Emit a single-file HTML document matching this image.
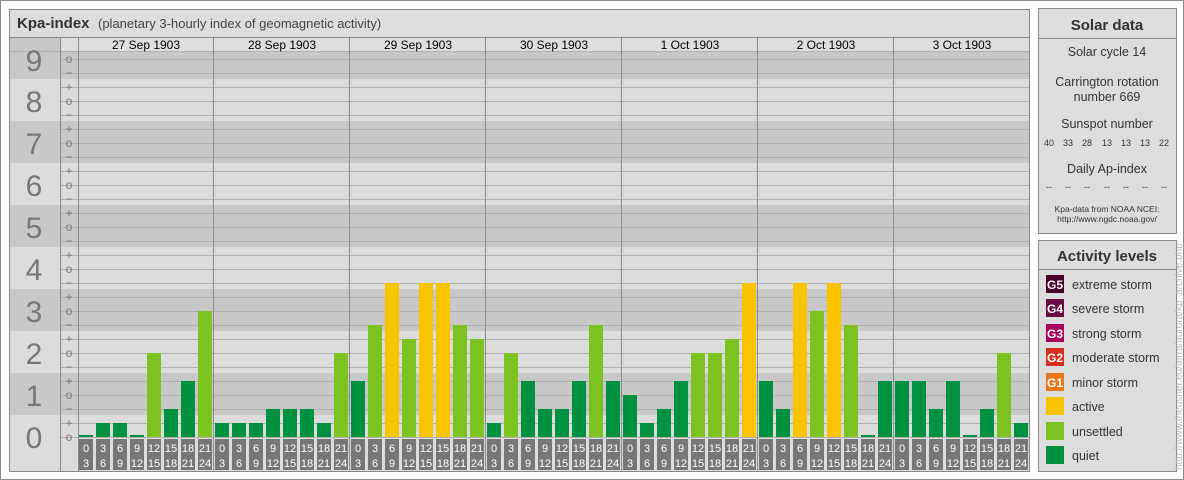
<!DOCTYPE html>
<html><head><meta charset="utf-8"><style>
html,body{margin:0;padding:0;background:#fff;}
svg{display:block;font-family:"Liberation Sans",Arial,sans-serif;}
.q{fill:#009140}.u{fill:#7cc220}.a{fill:#f8c400}
.hb{fill:#777}
.ht{fill:#fff;font-size:11px;text-anchor:middle}
.pm{fill:#777;font-size:12px;text-anchor:middle}
.big{fill:#777;font-size:30px;text-anchor:middle}
.dt{fill:#000;font-size:12px;text-anchor:middle}
.rt{fill:#333;font-size:12.5px;text-anchor:middle}
.lg{fill:#333;font-size:12.5px}
.gl{fill:#fff;font-size:12px;font-weight:bold;text-anchor:middle}
</style></head><body>
<svg width="1184" height="480" viewBox="0 0 1184 480" xmlns="http://www.w3.org/2000/svg">
<rect x="0.5" y="0.5" width="1183" height="479" fill="#fff" stroke="#888"/>
<rect x="9.5" y="9.5" width="1020" height="462" fill="#ddd" stroke="#888"/>
<line x1="9" y1="37.5" x2="1030" y2="37.5" stroke="#888"/>
<text x="17" y="28" font-size="15" font-weight="bold" fill="#333">Kpa-index</text>
<text x="98" y="28" font-size="13" fill="#444">(planetary 3-hourly index of geomagnetic activity)</text>
<rect x="10" y="51" width="1019" height="28" fill="#c8c8c8"/>
<rect x="10" y="79" width="1019" height="42" fill="#dcdcdc"/>
<rect x="10" y="121" width="1019" height="42" fill="#c8c8c8"/>
<rect x="10" y="163" width="1019" height="42" fill="#dcdcdc"/>
<rect x="10" y="205" width="1019" height="42" fill="#c8c8c8"/>
<rect x="10" y="247" width="1019" height="42" fill="#dcdcdc"/>
<rect x="10" y="289" width="1019" height="42" fill="#c8c8c8"/>
<rect x="10" y="331" width="1019" height="42" fill="#dcdcdc"/>
<rect x="10" y="373" width="1019" height="42" fill="#c8c8c8"/>
<rect x="10" y="415" width="1019" height="56" fill="#dcdcdc"/>
<rect x="10" y="38" width="1019" height="13" fill="#c8c8c8"/>
<rect x="61" y="38" width="968" height="13" fill="#dedede"/>
<g stroke="#b0b0b0" stroke-width="1">
<line x1="60" y1="59.5" x2="1029" y2="59.5"/><line x1="60" y1="73.5" x2="1029" y2="73.5"/><line x1="60" y1="87.5" x2="1029" y2="87.5"/><line x1="60" y1="101.5" x2="1029" y2="101.5"/><line x1="60" y1="115.5" x2="1029" y2="115.5"/><line x1="60" y1="129.5" x2="1029" y2="129.5"/><line x1="60" y1="143.5" x2="1029" y2="143.5"/><line x1="60" y1="157.5" x2="1029" y2="157.5"/><line x1="60" y1="171.5" x2="1029" y2="171.5"/><line x1="60" y1="185.5" x2="1029" y2="185.5"/><line x1="60" y1="199.5" x2="1029" y2="199.5"/><line x1="60" y1="213.5" x2="1029" y2="213.5"/><line x1="60" y1="227.5" x2="1029" y2="227.5"/><line x1="60" y1="241.5" x2="1029" y2="241.5"/><line x1="60" y1="255.5" x2="1029" y2="255.5"/><line x1="60" y1="269.5" x2="1029" y2="269.5"/><line x1="60" y1="283.5" x2="1029" y2="283.5"/><line x1="60" y1="297.5" x2="1029" y2="297.5"/><line x1="60" y1="311.5" x2="1029" y2="311.5"/><line x1="60" y1="325.5" x2="1029" y2="325.5"/><line x1="60" y1="339.5" x2="1029" y2="339.5"/><line x1="60" y1="353.5" x2="1029" y2="353.5"/><line x1="60" y1="367.5" x2="1029" y2="367.5"/><line x1="60" y1="381.5" x2="1029" y2="381.5"/><line x1="60" y1="395.5" x2="1029" y2="395.5"/><line x1="60" y1="409.5" x2="1029" y2="409.5"/><line x1="60" y1="423.5" x2="1029" y2="423.5"/><line x1="60" y1="437.5" x2="1029" y2="437.5"/>
</g>
<line x1="10" y1="51.5" x2="1029" y2="51.5" stroke="#b0b0b0"/>
<rect x="78" y="438" width="951" height="33" fill="#ddd"/>
<g stroke="#888">
<line x1="60.5" y1="37" x2="60.5" y2="471"/>
<line x1="78.5" y1="37" x2="78.5" y2="471"/>
<line x1="213.5" y1="37" x2="213.5" y2="471"/>
<line x1="349.5" y1="37" x2="349.5" y2="471"/>
<line x1="485.5" y1="37" x2="485.5" y2="471"/>
<line x1="621.5" y1="37" x2="621.5" y2="471"/>
<line x1="757.5" y1="37" x2="757.5" y2="471"/>
<line x1="893.5" y1="37" x2="893.5" y2="471"/>
</g>
<text class="big" x="34" y="71">9</text>
<text class="big" x="34" y="112">8</text>
<text class="big" x="34" y="154">7</text>
<text class="big" x="34" y="196">6</text>
<text class="big" x="34" y="238">5</text>
<text class="big" x="34" y="280">4</text>
<text class="big" x="34" y="322">3</text>
<text class="big" x="34" y="364">2</text>
<text class="big" x="34" y="406">1</text>
<text class="big" x="34" y="448">0</text>
<g class="pm">
<text x="69" y="63">o</text><text x="69" y="77">−</text><text x="69" y="91">+</text><text x="69" y="105">o</text><text x="69" y="119">−</text><text x="69" y="133">+</text><text x="69" y="147">o</text><text x="69" y="161">−</text><text x="69" y="175">+</text><text x="69" y="189">o</text><text x="69" y="203">−</text><text x="69" y="217">+</text><text x="69" y="231">o</text><text x="69" y="245">−</text><text x="69" y="259">+</text><text x="69" y="273">o</text><text x="69" y="287">−</text><text x="69" y="301">+</text><text x="69" y="315">o</text><text x="69" y="329">−</text><text x="69" y="343">+</text><text x="69" y="357">o</text><text x="69" y="371">−</text><text x="69" y="385">+</text><text x="69" y="399">o</text><text x="69" y="413">−</text><text x="69" y="427">+</text><text x="69" y="441">o</text>
</g>
<text class="dt" x="146" y="49">27 Sep 1903</text>
<text class="dt" x="282" y="49">28 Sep 1903</text>
<text class="dt" x="418" y="49">29 Sep 1903</text>
<text class="dt" x="554" y="49">30 Sep 1903</text>
<text class="dt" x="690" y="49">1 Oct 1903</text>
<text class="dt" x="826" y="49">2 Oct 1903</text>
<text class="dt" x="962" y="49">3 Oct 1903</text>
<rect class="q" x="79" y="435" width="14" height="2"/><rect class="q" x="96" y="423" width="14" height="14"/><rect class="q" x="113" y="423" width="14" height="14"/><rect class="q" x="130" y="435" width="14" height="2"/><rect class="u" x="147" y="353" width="14" height="84"/><rect class="q" x="164" y="409" width="14" height="28"/><rect class="q" x="181" y="381" width="14" height="56"/><rect class="u" x="198" y="311" width="14" height="126"/>
<rect class="q" x="215" y="423" width="14" height="14"/><rect class="q" x="232" y="423" width="14" height="14"/><rect class="q" x="249" y="423" width="14" height="14"/><rect class="q" x="266" y="409" width="14" height="28"/><rect class="q" x="283" y="409" width="14" height="28"/><rect class="q" x="300" y="409" width="14" height="28"/><rect class="q" x="317" y="423" width="14" height="14"/><rect class="u" x="334" y="353" width="14" height="84"/>
<rect class="q" x="351" y="381" width="14" height="56"/><rect class="u" x="368" y="325" width="14" height="112"/><rect class="a" x="385" y="283" width="14" height="154"/><rect class="u" x="402" y="339" width="14" height="98"/><rect class="a" x="419" y="283" width="14" height="154"/><rect class="a" x="436" y="283" width="14" height="154"/><rect class="u" x="453" y="325" width="14" height="112"/><rect class="u" x="470" y="339" width="14" height="98"/>
<rect class="q" x="487" y="423" width="14" height="14"/><rect class="u" x="504" y="353" width="14" height="84"/><rect class="q" x="521" y="381" width="14" height="56"/><rect class="q" x="538" y="409" width="14" height="28"/><rect class="q" x="555" y="409" width="14" height="28"/><rect class="q" x="572" y="381" width="14" height="56"/><rect class="u" x="589" y="325" width="14" height="112"/><rect class="q" x="606" y="381" width="14" height="56"/>
<rect class="q" x="623" y="395" width="14" height="42"/><rect class="q" x="640" y="423" width="14" height="14"/><rect class="q" x="657" y="409" width="14" height="28"/><rect class="q" x="674" y="381" width="14" height="56"/><rect class="u" x="691" y="353" width="14" height="84"/><rect class="u" x="708" y="353" width="14" height="84"/><rect class="u" x="725" y="339" width="14" height="98"/><rect class="a" x="742" y="283" width="14" height="154"/>
<rect class="q" x="759" y="381" width="14" height="56"/><rect class="q" x="776" y="409" width="14" height="28"/><rect class="a" x="793" y="283" width="14" height="154"/><rect class="u" x="810" y="311" width="14" height="126"/><rect class="a" x="827" y="283" width="14" height="154"/><rect class="u" x="844" y="325" width="14" height="112"/><rect class="q" x="861" y="435" width="14" height="2"/><rect class="q" x="878" y="381" width="14" height="56"/>
<rect class="q" x="895" y="381" width="14" height="56"/><rect class="q" x="912" y="381" width="14" height="56"/><rect class="q" x="929" y="409" width="14" height="28"/><rect class="q" x="946" y="381" width="14" height="56"/><rect class="q" x="963" y="435" width="14" height="2"/><rect class="q" x="980" y="409" width="14" height="28"/><rect class="u" x="997" y="353" width="14" height="84"/><rect class="q" x="1014" y="423" width="14" height="14"/>
<g transform="translate(78,0)"><rect class="hb" x="1" y="439" width="14" height="31"/><rect class="hb" x="18" y="439" width="14" height="31"/><rect class="hb" x="35" y="439" width="14" height="31"/><rect class="hb" x="52" y="439" width="14" height="31"/><rect class="hb" x="69" y="439" width="14" height="31"/><rect class="hb" x="86" y="439" width="14" height="31"/><rect class="hb" x="103" y="439" width="14" height="31"/><rect class="hb" x="120" y="439" width="14" height="31"/><text class="ht" x="8" y="452">0</text><text class="ht" x="25" y="452">3</text><text class="ht" x="42" y="452">6</text><text class="ht" x="59" y="452">9</text><text class="ht" x="76" y="452">12</text><text class="ht" x="93" y="452">15</text><text class="ht" x="110" y="452">18</text><text class="ht" x="127" y="452">21</text><text class="ht" x="8" y="467">3</text><text class="ht" x="25" y="467">6</text><text class="ht" x="42" y="467">9</text><text class="ht" x="59" y="467">12</text><text class="ht" x="76" y="467">15</text><text class="ht" x="93" y="467">18</text><text class="ht" x="110" y="467">21</text><text class="ht" x="127" y="467">24</text></g>
<g transform="translate(214,0)"><rect class="hb" x="1" y="439" width="14" height="31"/><rect class="hb" x="18" y="439" width="14" height="31"/><rect class="hb" x="35" y="439" width="14" height="31"/><rect class="hb" x="52" y="439" width="14" height="31"/><rect class="hb" x="69" y="439" width="14" height="31"/><rect class="hb" x="86" y="439" width="14" height="31"/><rect class="hb" x="103" y="439" width="14" height="31"/><rect class="hb" x="120" y="439" width="14" height="31"/><text class="ht" x="8" y="452">0</text><text class="ht" x="25" y="452">3</text><text class="ht" x="42" y="452">6</text><text class="ht" x="59" y="452">9</text><text class="ht" x="76" y="452">12</text><text class="ht" x="93" y="452">15</text><text class="ht" x="110" y="452">18</text><text class="ht" x="127" y="452">21</text><text class="ht" x="8" y="467">3</text><text class="ht" x="25" y="467">6</text><text class="ht" x="42" y="467">9</text><text class="ht" x="59" y="467">12</text><text class="ht" x="76" y="467">15</text><text class="ht" x="93" y="467">18</text><text class="ht" x="110" y="467">21</text><text class="ht" x="127" y="467">24</text></g>
<g transform="translate(350,0)"><rect class="hb" x="1" y="439" width="14" height="31"/><rect class="hb" x="18" y="439" width="14" height="31"/><rect class="hb" x="35" y="439" width="14" height="31"/><rect class="hb" x="52" y="439" width="14" height="31"/><rect class="hb" x="69" y="439" width="14" height="31"/><rect class="hb" x="86" y="439" width="14" height="31"/><rect class="hb" x="103" y="439" width="14" height="31"/><rect class="hb" x="120" y="439" width="14" height="31"/><text class="ht" x="8" y="452">0</text><text class="ht" x="25" y="452">3</text><text class="ht" x="42" y="452">6</text><text class="ht" x="59" y="452">9</text><text class="ht" x="76" y="452">12</text><text class="ht" x="93" y="452">15</text><text class="ht" x="110" y="452">18</text><text class="ht" x="127" y="452">21</text><text class="ht" x="8" y="467">3</text><text class="ht" x="25" y="467">6</text><text class="ht" x="42" y="467">9</text><text class="ht" x="59" y="467">12</text><text class="ht" x="76" y="467">15</text><text class="ht" x="93" y="467">18</text><text class="ht" x="110" y="467">21</text><text class="ht" x="127" y="467">24</text></g>
<g transform="translate(486,0)"><rect class="hb" x="1" y="439" width="14" height="31"/><rect class="hb" x="18" y="439" width="14" height="31"/><rect class="hb" x="35" y="439" width="14" height="31"/><rect class="hb" x="52" y="439" width="14" height="31"/><rect class="hb" x="69" y="439" width="14" height="31"/><rect class="hb" x="86" y="439" width="14" height="31"/><rect class="hb" x="103" y="439" width="14" height="31"/><rect class="hb" x="120" y="439" width="14" height="31"/><text class="ht" x="8" y="452">0</text><text class="ht" x="25" y="452">3</text><text class="ht" x="42" y="452">6</text><text class="ht" x="59" y="452">9</text><text class="ht" x="76" y="452">12</text><text class="ht" x="93" y="452">15</text><text class="ht" x="110" y="452">18</text><text class="ht" x="127" y="452">21</text><text class="ht" x="8" y="467">3</text><text class="ht" x="25" y="467">6</text><text class="ht" x="42" y="467">9</text><text class="ht" x="59" y="467">12</text><text class="ht" x="76" y="467">15</text><text class="ht" x="93" y="467">18</text><text class="ht" x="110" y="467">21</text><text class="ht" x="127" y="467">24</text></g>
<g transform="translate(622,0)"><rect class="hb" x="1" y="439" width="14" height="31"/><rect class="hb" x="18" y="439" width="14" height="31"/><rect class="hb" x="35" y="439" width="14" height="31"/><rect class="hb" x="52" y="439" width="14" height="31"/><rect class="hb" x="69" y="439" width="14" height="31"/><rect class="hb" x="86" y="439" width="14" height="31"/><rect class="hb" x="103" y="439" width="14" height="31"/><rect class="hb" x="120" y="439" width="14" height="31"/><text class="ht" x="8" y="452">0</text><text class="ht" x="25" y="452">3</text><text class="ht" x="42" y="452">6</text><text class="ht" x="59" y="452">9</text><text class="ht" x="76" y="452">12</text><text class="ht" x="93" y="452">15</text><text class="ht" x="110" y="452">18</text><text class="ht" x="127" y="452">21</text><text class="ht" x="8" y="467">3</text><text class="ht" x="25" y="467">6</text><text class="ht" x="42" y="467">9</text><text class="ht" x="59" y="467">12</text><text class="ht" x="76" y="467">15</text><text class="ht" x="93" y="467">18</text><text class="ht" x="110" y="467">21</text><text class="ht" x="127" y="467">24</text></g>
<g transform="translate(758,0)"><rect class="hb" x="1" y="439" width="14" height="31"/><rect class="hb" x="18" y="439" width="14" height="31"/><rect class="hb" x="35" y="439" width="14" height="31"/><rect class="hb" x="52" y="439" width="14" height="31"/><rect class="hb" x="69" y="439" width="14" height="31"/><rect class="hb" x="86" y="439" width="14" height="31"/><rect class="hb" x="103" y="439" width="14" height="31"/><rect class="hb" x="120" y="439" width="14" height="31"/><text class="ht" x="8" y="452">0</text><text class="ht" x="25" y="452">3</text><text class="ht" x="42" y="452">6</text><text class="ht" x="59" y="452">9</text><text class="ht" x="76" y="452">12</text><text class="ht" x="93" y="452">15</text><text class="ht" x="110" y="452">18</text><text class="ht" x="127" y="452">21</text><text class="ht" x="8" y="467">3</text><text class="ht" x="25" y="467">6</text><text class="ht" x="42" y="467">9</text><text class="ht" x="59" y="467">12</text><text class="ht" x="76" y="467">15</text><text class="ht" x="93" y="467">18</text><text class="ht" x="110" y="467">21</text><text class="ht" x="127" y="467">24</text></g>
<g transform="translate(894,0)"><rect class="hb" x="1" y="439" width="14" height="31"/><rect class="hb" x="18" y="439" width="14" height="31"/><rect class="hb" x="35" y="439" width="14" height="31"/><rect class="hb" x="52" y="439" width="14" height="31"/><rect class="hb" x="69" y="439" width="14" height="31"/><rect class="hb" x="86" y="439" width="14" height="31"/><rect class="hb" x="103" y="439" width="14" height="31"/><rect class="hb" x="120" y="439" width="14" height="31"/><text class="ht" x="8" y="452">0</text><text class="ht" x="25" y="452">3</text><text class="ht" x="42" y="452">6</text><text class="ht" x="59" y="452">9</text><text class="ht" x="76" y="452">12</text><text class="ht" x="93" y="452">15</text><text class="ht" x="110" y="452">18</text><text class="ht" x="127" y="452">21</text><text class="ht" x="8" y="467">3</text><text class="ht" x="25" y="467">6</text><text class="ht" x="42" y="467">9</text><text class="ht" x="59" y="467">12</text><text class="ht" x="76" y="467">15</text><text class="ht" x="93" y="467">18</text><text class="ht" x="110" y="467">21</text><text class="ht" x="127" y="467">24</text></g>
<rect x="9.5" y="9.5" width="1020" height="462" fill="none" stroke="#888"/>
<rect x="1038.5" y="8.5" width="138" height="225" fill="#ddd" stroke="#888"/>
<line x1="1038" y1="38.5" x2="1177" y2="38.5" stroke="#888"/>
<text x="1107" y="30" font-size="15" font-weight="bold" fill="#333" text-anchor="middle">Solar data</text>
<text class="rt" x="1107" y="56">Solar cycle 14</text>
<text class="rt" x="1107" y="86">Carrington rotation</text>
<text class="rt" x="1107" y="101">number 669</text>
<text class="rt" x="1107" y="128">Sunspot number</text>
<g font-size="9" fill="#333" text-anchor="middle">
<text x="1049" y="146">40</text><text x="1068" y="146">33</text><text x="1087" y="146">28</text><text x="1107" y="146">13</text><text x="1126" y="146">13</text><text x="1145" y="146">13</text><text x="1164" y="146">22</text>
<text x="1049" y="190">--</text><text x="1068" y="190">--</text><text x="1087" y="190">--</text><text x="1107" y="190">--</text><text x="1126" y="190">--</text><text x="1145" y="190">--</text><text x="1164" y="190">--</text>
</g>
<text class="rt" x="1107" y="173">Daily Ap-index</text>
<text x="1107" y="212" font-size="8.5" fill="#333" text-anchor="middle">Kpa-data from NOAA NCEI:</text>
<text x="1107" y="222" font-size="8.5" fill="#333" text-anchor="middle">http://www.ngdc.noaa.gov/</text>
<rect x="1038.5" y="240.5" width="138" height="231" fill="#ddd" stroke="#888"/>
<line x1="1038" y1="269.5" x2="1177" y2="269.5" stroke="#888"/>
<text x="1107" y="261" font-size="15" font-weight="bold" fill="#333" text-anchor="middle">Activity levels</text>
<rect x="1046" y="275" width="18" height="18" fill="#4a0025"/><text class="gl" x="1055" y="289">G5</text><text class="lg" x="1072" y="289">extreme storm</text>
<rect x="1046" y="299" width="18" height="18" fill="#6b0a42"/><text class="gl" x="1055" y="313">G4</text><text class="lg" x="1072" y="313">severe storm</text>
<rect x="1046" y="324" width="18" height="18" fill="#a8005c"/><text class="gl" x="1055" y="338">G3</text><text class="lg" x="1072" y="338">strong storm</text>
<rect x="1046" y="348" width="18" height="18" fill="#d8301e"/><text class="gl" x="1055" y="362">G2</text><text class="lg" x="1072" y="362">moderate storm</text>
<rect x="1046" y="373" width="18" height="18" fill="#e8781a"/><text class="gl" x="1055" y="387">G1</text><text class="lg" x="1072" y="387">minor storm</text>
<rect x="1046" y="397" width="18" height="18" fill="#f8c400"/><text class="lg" x="1072" y="411">active</text>
<rect x="1046" y="422" width="18" height="18" fill="#7cc220"/><text class="lg" x="1072" y="436">unsettled</text>
<rect x="1046" y="446" width="18" height="18" fill="#009140"/><text class="lg" x="1072" y="460">quiet</text>
<text transform="translate(1182,470) rotate(-90)" font-size="10" fill="#bbb">http://www.theusner.eu/terra/aurora/kp_archive.php</text>
</svg>
</body></html>
